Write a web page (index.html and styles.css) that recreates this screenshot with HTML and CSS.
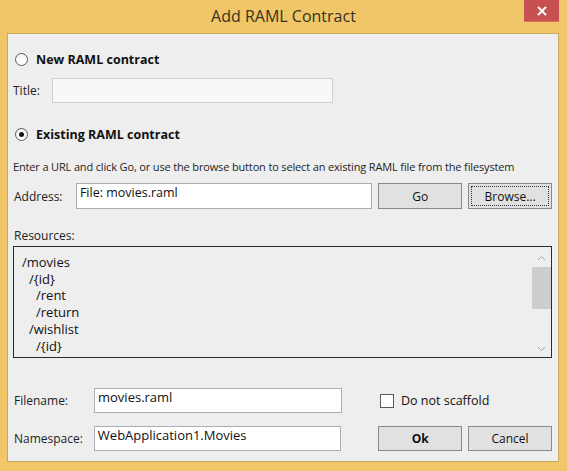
FILE: index.html
```html
<!DOCTYPE html>
<html>
<head>
<meta charset="utf-8">
<title>Add RAML Contract</title>
<link rel="stylesheet" href="styles.css">
</head>
<body>
<div class="window">
  <div class="titlebar">
    <div class="title">Add RAML Contract</div>
    <div class="close"><svg width="12" height="10" viewBox="0 0 12 10"><path d="M2 1 L10 9 M10 1 L2 9" stroke="#fff" stroke-width="2"/></svg></div>
  </div>
  <div class="content">
    <div class="radio-row first">
      <span class="radio"></span>
      <span class="radio-label">New RAML contract</span>
    </div>
    <div class="title-row">
      <span class="lbl lbl-title">Title:</span>
      <div class="input disabled title-input"></div>
    </div>
    <div class="radio-row second">
      <span class="radio checked"></span>
      <span class="radio-label">Existing RAML contract</span>
    </div>
    <div class="hint">Enter a URL and click Go, or use the browse button to select an existing RAML file from the filesystem</div>
    <div class="address-row">
      <span class="lbl lbl-address">Address:</span>
      <div class="input address-input">File: movies.raml</div>
      <div class="btn go">Go</div>
      <div class="btn browse"><span class="focus">Browse...</span></div>
    </div>
    <div class="lbl resources-label">Resources:</div>
    <div class="listbox">
      <div class="tree">
        <div class="l0">/movies</div>
        <div class="l1">/{id}</div>
        <div class="l2">/rent</div>
        <div class="l2">/return</div>
        <div class="l1">/wishlist</div>
        <div class="l2">/{id}</div>
      </div>
      <div class="scrollbar">
        <svg class="arrow" width="9" height="6" viewBox="0 0 9 6"><path d="M1 5 L4.5 1.5 L8 5" fill="none" stroke="#a6a6a6" stroke-width="1"/></svg>
        <div class="track"><div class="thumb"></div></div>
        <svg class="arrow" width="9" height="6" viewBox="0 0 9 6"><path d="M1 1 L4.5 4.5 L8 1" fill="none" stroke="#a6a6a6" stroke-width="1"/></svg>
      </div>
    </div>
    <div class="bottom">
      <div class="form-row">
        <span class="lbl lbl-bottom">Filename:</span>
        <div class="input bottom-input">movies.raml</div>
        <label class="check"><span class="box"></span><span>Do not scaffold</span></label>
      </div>
      <div class="form-row second-row">
        <span class="lbl lbl-bottom">Namespace:</span>
        <div class="input bottom-input">WebApplication1.Movies</div>
        <div class="btn ok">Ok</div>
        <div class="btn cancel">Cancel</div>
      </div>
    </div>
  </div>
</div>
</body>
</html>
```

FILE: styles.css
```css
* { box-sizing: border-box; }
html, body { margin: 0; padding: 0; }
body {
  width: 567px;
  height: 471px;
  overflow: hidden;
  font-family: "Open Sans", "Noto Sans", sans-serif;
  color: #1e1e1e;
}
.window {
  width: 567px;
  height: 471px;
  background: #f0c668;
  display: flex;
  flex-direction: column;
}
.titlebar {
  height: 33px;
  position: relative;
  display: flex;
  justify-content: center;
}
.title {
  font-size: 16px;
  line-height: 22px;
  color: #37321f;
  padding-top: 5px;
}
.close {
  position: absolute;
  left: 524px;
  top: 0;
  width: 35px;
  height: 22px;
  background: #c75050;
  display: flex;
  align-items: center;
  justify-content: center;
  border-bottom: 1px solid #d8725e;
}
.content {
  margin: 0 8px 9px 7px;
  flex: 1;
  background: #eeeeee;
  border: 1px solid #c9a860;
  padding: 0 6px 0 5px;
  font-size: 12px;
}
.radio-row {
  display: flex;
  align-items: center;
  height: 16px;
}
.radio-row.first { margin-top: 17px; margin-left: 2px; }
.radio-row.second { margin-top: 23px; margin-left: 2px; }
.radio {
  width: 13px;
  height: 13px;
  border-radius: 50%;
  border: 1px solid #5a5a5a;
  background: linear-gradient(#f4f4f4, #ffffff);
  display: inline-flex;
  align-items: center;
  justify-content: center;
  margin-right: 8px;
}
.radio.checked::after {
  content: "";
  width: 5px;
  height: 5px;
  border-radius: 50%;
  background: #1a1a1a;
}
.radio-label {
  font-weight: bold;
  font-size: 12.5px;
  color: #111;
}
.lbl { color: #222; font-size: 12px; }
.title-row {
  display: flex;
  align-items: center;
  margin-top: 11px;
  height: 25px;
}
.lbl-title { width: 39px; }
.input {
  height: 25px;
  background: #fff;
  border: 1px solid #abadb3;
  font-size: 13px;
  padding: 0 3px;
  line-height: 17px;
  color: #111;
}
.input.disabled {
  background: #f8f8f8;
  border-color: #d0d0d0;
}
.title-input { width: 281px; }
.hint {
  margin-top: 18px;
  height: 14px;
  line-height: 14px;
  font-size: 11px;
  letter-spacing: -0.15px;
  white-space: nowrap;
}
.address-row {
  display: flex;
  align-items: center;
  margin-top: 9px;
  height: 26px;
}
.lbl-address { width: 62px; margin-left: 1px; }
.address-input { width: 297px; height: 26px; font-size: 12.5px; }
.btn {
  height: 26px;
  width: 84px;
  border: 1px solid #8a8a8a;
  background: #e1e1e1;
  display: flex;
  align-items: center;
  justify-content: center;
  font-size: 12px;
  color: #111;
}
.go { margin-left: 6px; }
.browse { margin-left: 6px; padding: 2px; }
.browse .focus {
  border: 1px dotted #333;
  width: 100%;
  height: 100%;
  display: flex;
  align-items: center;
  justify-content: center;
}
.resources-label {
  margin-top: 19px;
  height: 15px;
  line-height: 15px;
  margin-left: 1px;
}
.listbox {
  margin-top: 3px;
  height: 112px;
  border: 1px solid #2b2b2b;
  display: flex;
}
.tree {
  flex: 1;
  padding: 7px 0 0 8px;
  font-size: 13px;
  line-height: 16.7px;
  color: #111;
}
.l1 { padding-left: 7px; }
.l2 { padding-left: 14px; }
.scrollbar {
  width: 19px;
  display: flex;
  flex-direction: column;
  align-items: center;
  padding: 8px 0 5px 0;
}
.arrow { flex: none; }
.track { flex: 1; width: 100%; padding-top: 6px; }
.thumb { width: 100%; height: 42px; background: #cdcdcd; }
.bottom { margin-top: 30px; }
.form-row {
  display: flex;
  align-items: center;
  height: 25px;
}
.second-row { margin-top: 13px; }
.lbl-bottom { width: 80px; margin-left: 1px; }
.bottom-input { width: 248px; }
.check {
  display: flex;
  align-items: center;
  margin-left: 38px;
  font-size: 12.5px;
  color: #111;
}
.check .box {
  width: 14px;
  height: 14px;
  border: 1px solid #5a5a5a;
  background: #fff;
  margin-right: 7px;
}
.ok { margin-left: 37px; font-weight: bold; height: 25px; width: 84px; }
.cancel { margin-left: 6px; height: 25px; width: 84px; }
```
